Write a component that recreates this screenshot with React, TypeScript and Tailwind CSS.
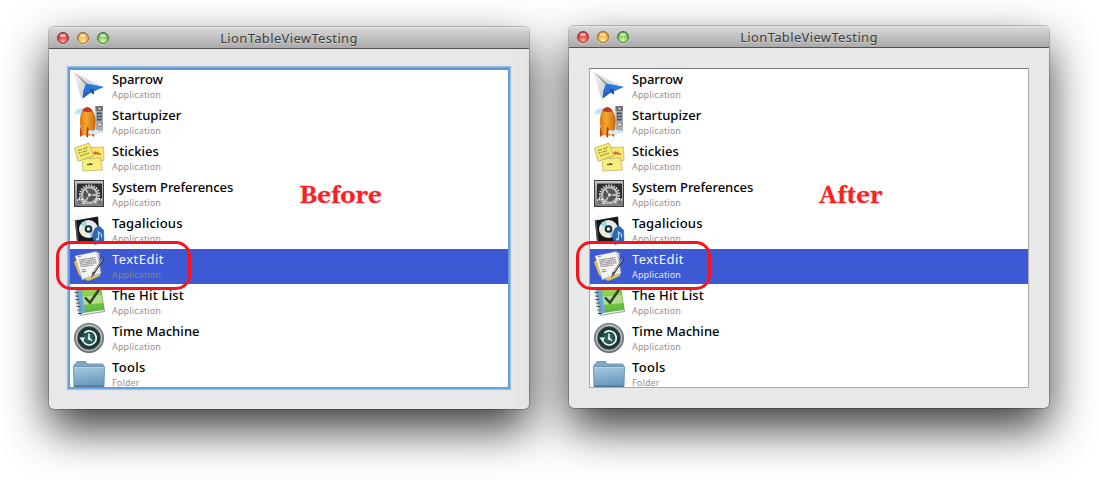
import React from 'react';

type IconProps = { uid: string };

interface Item {
  name: string;
  kind: string;
  icon: React.FC<IconProps>;
  tracking: string;
}

const iconClass = 'h-8 w-8 shrink-0 overflow-visible';

const SparrowIcon: React.FC<IconProps> = ({ uid }) => (
  <svg viewBox="0 0 32 32" className={iconClass}>
    <defs>
      <linearGradient id={`${uid}-wing`} x1="0" y1="0" x2="0.6" y2="1">
        <stop offset="0" stopColor="#f6f6f6" />
        <stop offset="1" stopColor="#cfcfd1" />
      </linearGradient>
      <linearGradient id={`${uid}-blue`} x1="0" y1="0" x2="0" y2="1">
        <stop offset="0" stopColor="#2f7fe2" />
        <stop offset="1" stopColor="#2459ae" />
      </linearGradient>
    </defs>
    <path d="M1.5 2.5 L14 14 L9 28 L7.5 26 Z" fill={`url(#${uid}-wing)`} stroke="#d2d2d2" strokeWidth=".4" />
    <path d="M1.5 2.5 L29 16.5 L14 14 Z" fill="#dcdcdd" />
    <path d="M1.5 2.5 L14.5 14 L13 15 Z" fill="#858587" />
    <path d="M13 13.5 L30.8 17 L21 21.2 L20.8 24.6 L18 22.4 L9.5 28.8 L10.5 20 Z" fill={`url(#${uid}-blue)`} />
    <path d="M13 13.5 L30.8 17 L19 18.6 Z" fill="#2c7ce0" />
    <path d="M17 18 L21 21.2 L20.8 24.6 L18 22.4 Z" fill="#1b4d98" />
  </svg>
);

const StartupizerIcon: React.FC<IconProps> = ({ uid }) => (
  <svg viewBox="0 0 32 32" className={iconClass}>
    <defs>
      <linearGradient id={`${uid}-hull`}>
        <stop offset="0" stopColor="#d9760d" />
        <stop offset=".4" stopColor="#f9ad35" />
        <stop offset="1" stopColor="#c8650f" />
      </linearGradient>
    </defs>
    <rect x="22.5" y="0" width="7.5" height="26" fill="#a7aaad" />
    <rect x="22.5" y="0" width="7.5" height="5" fill="#77797b" />
    <circle cx="26.5" cy="2.7" r="1.6" fill="#d8d8d8" stroke="#444" strokeWidth=".7" />
    <rect x="24" y="6.5" width="4.5" height="8" fill="#3c4a55" />
    <path d="M24.5 9h3.5M24.5 12h3.5" stroke="#8fb5cb" strokeWidth="1.3" />
    <circle cx="26.5" cy="18.5" r="1.8" fill="#eceff1" stroke="#666" strokeWidth=".7" />
    <path d="M2 6c0-3 3-4 5-3 2-2 6-1 5 2 1 2-1 3-3 3H4C2 9 1 8 2 6Z" fill="#bde7f5" />
    <path d="M9 18 L7 23 L7 31 L11 28Z M19 18 L22 24 L21 31 L17 28Z" fill="#cf4015" />
    <path d="M14.5 1 C22 3 25 15 20.5 27.5 C16 31 12 30 9 27.5 C5 14 7 3 14.5 1Z" fill={`url(#${uid}-hull)`} />
    <path d="M14.5 1 C11.5 1.6 10 3 9.3 5 C12.5 6.5 17 6.5 19.6 5 C18 2.6 16.5 1.5 14.5 1Z" fill="#c33c22" />
    <path d="M12 11c1.5-1.5 4-1.5 5 0s-1 3-2.5 3.5-3 2-2 3.5 3.5 1.5 5 0" stroke="#dd9024" strokeWidth=".9" fill="none" />
    <path d="M13.7 21 L15.7 22 L15 31.5 L13.4 31Z" fill="#a83a14" />
    <path d="M15 26c1-2 4-2 5-1 2-2 5-1 6 0 3-2 5 1 3 2-3 1-11 2-13 1Z" fill="#cdecf6" />
  </svg>
);

const StickiesIcon: React.FC<IconProps> = () => (
  <svg viewBox="0 0 32 32" className={iconClass}>
    <path d="M15.5 5.5 L30.5 5 L31 18.5 L17 19Z" fill="#f8e76d" stroke="#bda961" strokeWidth=".7" />
    <path d="M9 17 L27.5 16 L29.5 28 L10 29Z" fill="#f8ee7b" stroke="#b4aa66" strokeWidth=".7" />
    <path d="M1.5 6 L16 1 L20.5 13.5 L5 19.5Z" fill="#f4e968" stroke="#b1a765" strokeWidth=".7" />
    <path d="M5 8.5l4-1.2M10.5 6.8l4-1.3M5.5 11l3-.7M10 10l4-1.5M7 14l9-3" stroke="#5e5b2c" strokeWidth=".8" strokeDasharray="2 .6" />
    <path d="M20.5 11.5l1.5-1.5.5 2 2-1.7.5 2 1.5-1 1 1.5" stroke="#d34731" strokeWidth="1.1" fill="none" />
    <path d="M14 22.5l2 .5 1-2 1 2 2-1.5" stroke="#3c3a22" strokeWidth="1" fill="none" />
  </svg>
);

const PreferencesIcon: React.FC<IconProps> = ({ uid }) => (
  <svg viewBox="0 0 32 32" className={iconClass}>
    <defs>
      <linearGradient id={`${uid}-frame`} x1="0" y1="0" x2="0" y2="1">
        <stop offset="0" stopColor="#c9c9c9" />
        <stop offset="1" stopColor="#7c7c7e" />
      </linearGradient>
      <clipPath id={`${uid}-clip`}>
        <rect x="4" y="5.5" width="25" height="20.5" />
      </clipPath>
    </defs>
    <rect x="1.5" y="2.5" width="29" height="26" fill={`url(#${uid}-frame)`} stroke="#404042" />
    <rect x="4" y="5.5" width="25" height="20.5" fill="#303031" />
    <g clipPath={`url(#${uid}-clip)`}>
      <circle cx="16.5" cy="17" r="9.5" fill="none" stroke="#dcdcdc" strokeWidth="2.2" strokeDasharray="1.5 1.2" />
      <circle cx="16.5" cy="17" r="7.6" fill="#58585a" stroke="#c6c6c7" strokeWidth="1.8" />
      <path d="M16.5 17l-4-6M16.5 17l7 0M16.5 17l-4 6" stroke="#bcbcbd" strokeWidth="1.8" />
      <circle cx="16.5" cy="17" r="2.3" fill="#d5d5d5" stroke="#333" strokeWidth=".8" />
      <circle cx="6.5" cy="25" r="4" fill="#77777a" stroke="#f0f0f0" strokeWidth="2.2" strokeDasharray="1.5 1" />
      <circle cx="26.5" cy="25" r="4" fill="#77777a" stroke="#f0f0f0" strokeWidth="2.2" strokeDasharray="1.5 1" />
      <path d="M12 25.5h9" stroke="#a8a8aa" strokeWidth="1.5" />
    </g>
  </svg>
);

const TagaliciousIcon: React.FC<IconProps> = () => (
  <svg viewBox="0 0 32 32" className={iconClass}>
    <path d="M1 8L8 0" stroke="#b9b9b9" strokeWidth=".5" />
    <path d="M2 6.5 L25 2.5 L27 27 L4 27.5Z" fill="#171719" />
    <path d="M2 6.5 L4 27.5 L5.5 27 L3.5 6.3Z" fill="#505255" />
    <ellipse cx="15.5" cy="15" rx="9.5" ry="9" fill="#e4eaee" />
    <path d="M15.5 15L7.5 10.5A8.7 8.7 0 0 1 12.5 6.7Z" fill="#8fd9da" />
    <path d="M15.5 15L24 18A8.7 8.7 0 0 1 18 23.5Z" fill="#a9bfdc" />
    <path d="M15.5 15L6.5 17A8.7 8.7 0 0 0 10 22Z" fill="#f4f1c9" />
    <circle cx="15.5" cy="15" r="3.8" fill="#1d2835" />
    <circle cx="15.5" cy="15" r="1.8" fill="#e8edf1" />
    <path d="M22 14.5l4-2.5 4.5 4 .5 12.5-9.5 2-2-9Z" fill="#2b68b1" stroke="#184583" strokeWidth=".5" />
    <path d="M25.5 25v-7l3 2.5v3" stroke="#a9d4fb" strokeWidth="1.2" fill="none" />
    <ellipse cx="24.5" cy="25.3" rx="1.5" ry="1.2" fill="#a9d4fb" />
  </svg>
);

const TextEditIcon: React.FC<IconProps> = () => (
  <svg viewBox="0 0 32 32" className={iconClass}>
    <path d="M1 12 L4 10 L9 27 L27 23 L27 26 L15 31 L6 25Z" fill="#e8c53c" />
    <path d="M4 6 L26 2.5 L27.5 24 L9 30Z" fill="#dfdfdd" stroke="#9b9b9b" strokeWidth=".4" />
    <path d="M2 6 L23.5 1.5 L28 23 L9 29Z" fill="#f4f4f4" stroke="#a8a8a8" strokeWidth=".5" />
    <path
      d="M6 10l16.5-2.5M6.4 11.7l16.5-2.5M6.8 13.4l16.5-2.5M7.2 15.1l16.5-2.5M7.7 16.8l13-2"
      stroke="#8b8d90"
      strokeWidth="1.1"
      strokeDasharray="1.8 .3"
    />
    <path d="M5 6.8l3-.6M8.5 20l4-.7M8.5 22l5-.9" stroke="#6b6d70" strokeWidth=".8" />
    <path d="M30.5 8.5L20.5 23.5" stroke="#27292d" strokeWidth="2.2" strokeLinecap="round" />
    <path d="M30 8.5L21 22.2" stroke="#c5c9ce" strokeWidth="1" />
    <path d="M19.6 22l-1.6 6 4-4Z" fill="#5a5d62" />
  </svg>
);

const HitListIcon: React.FC<IconProps> = ({ uid }) => (
  <svg viewBox="0 0 32 32" className={iconClass}>
    <defs>
      <linearGradient id={`${uid}-cover`} x1="0" y1="0" x2="0" y2="1">
        <stop offset="0" stopColor="#9bd65a" />
        <stop offset="1" stopColor="#56b834" />
      </linearGradient>
    </defs>
    <path d="M3 5 L27.5 2.5 L31.5 25.5 L7 29.3Z" fill="#eef2ec" stroke="#73777a" strokeWidth=".7" />
    <path d="M3 4.5 L27.5 2.5 L31 23.5 L7 27Z" fill={`url(#${uid}-cover)`} stroke="#438c39" strokeWidth=".5" />
    <path d="M3 4.5 L8.5 4.1 L12.5 26.3 L7 27Z" fill="#6ba7dc" />
    <path d="M9.5 10.5 L28.5 9 L29.8 17 L11 18.8Z" fill="#b5e08a" />
    <path d="M12 11.5l5 5.3L26 3.5" stroke="#2c4532" strokeWidth="2.5" fill="none" />
    <path d="M1.5 6.5h4M1.7 10H6M2.2 13.5h4.3M2.7 17H7M3.3 20.5h4.3M4 24h4.3M4.7 27.5H9" stroke="#4b4e50" strokeWidth="1.2" />
    <path d="M1.5 5.6h3M1.7 9.1H5M2.2 12.6h3.3M2.7 16.1H6M3.3 19.6h3.3M4 23.1h3.3" stroke="#dadddd" strokeWidth=".6" />
  </svg>
);

const TimeMachineIcon: React.FC<IconProps> = ({ uid }) => (
  <svg viewBox="0 0 32 32" className={iconClass}>
    <defs>
      <linearGradient id={`${uid}-rim`} x1="0" y1="0" x2="0" y2="1">
        <stop offset="0" stopColor="#9a9fa2" />
        <stop offset="1" stopColor="#73787b" />
      </linearGradient>
      <radialGradient id={`${uid}-face`}>
        <stop offset="0" stopColor="#36706a" />
        <stop offset="1" stopColor="#10302f" />
      </radialGradient>
    </defs>
    <circle cx="16" cy="16" r="14.7" fill={`url(#${uid}-rim)`} stroke="#53585b" strokeWidth=".7" />
    <circle cx="16" cy="16" r="12.7" fill="none" stroke="#c3c8ca" strokeWidth="1" />
    <circle cx="16" cy="16" r="11" fill={`url(#${uid}-face)`} stroke="#31393b" />
    <path d="M9.4 17a7 7 0 1 0 2-6" stroke="#f0f6f5" strokeWidth="1.7" fill="none" />
    <path d="M6.3 15.5h6l-3 4Z" fill="#f0f6f5" />
    <path d="M16 11.5v5l3 2.2" stroke="#fff" strokeWidth="1.4" fill="none" />
    <circle cx="16" cy="16.5" r="1.2" fill="#fff" />
  </svg>
);

const FolderIcon: React.FC<IconProps> = ({ uid }) => (
  <svg viewBox="0 0 32 32" className={iconClass}>
    <defs>
      <linearGradient id={`${uid}-folder`} x1="0" y1="0" x2=".2" y2="1">
        <stop offset="0" stopColor="#a9cbe1" />
        <stop offset="1" stopColor="#6799bd" />
      </linearGradient>
    </defs>
    <path d="M1.2 9 V6.5 L3 6 L3.8 3.6 H12.5 L14 6 H29.5 L30.6 7 V10 H1.2Z" fill="#81a9c5" stroke="#557d99" strokeWidth=".7" />
    <path d="M.4 8.7 H31.6 L31 28.5 H1Z" fill={`url(#${uid}-folder)`} stroke="#557f9e" strokeWidth=".7" />
    <path d="M1 9.5h30" stroke="#c4dcea" strokeWidth=".7" />
    <path d="M1 28.2h30" stroke="#3f6886" strokeWidth="1" />
  </svg>
);

const items: Item[] = [
  { name: 'Sparrow', kind: 'Application', icon: SparrowIcon, tracking: 'tracking-[-0.1px]' },
  { name: 'Startupizer', kind: 'Application', icon: StartupizerIcon, tracking: 'tracking-[0.02px]' },
  { name: 'Stickies', kind: 'Application', icon: StickiesIcon, tracking: 'tracking-[0.05px]' },
  { name: 'System Preferences', kind: 'Application', icon: PreferencesIcon, tracking: 'tracking-[-0.06px]' },
  { name: 'Tagalicious', kind: 'Application', icon: TagaliciousIcon, tracking: 'tracking-[0.2px]' },
  { name: 'TextEdit', kind: 'Application', icon: TextEditIcon, tracking: 'tracking-[0.45px]' },
  { name: 'The Hit List', kind: 'Application', icon: HitListIcon, tracking: 'tracking-[0.2px]' },
  { name: 'Time Machine', kind: 'Application', icon: TimeMachineIcon, tracking: 'tracking-[0.05px]' },
  { name: 'Tools', kind: 'Folder', icon: FolderIcon, tracking: 'tracking-[0.3px]' },
];

const SELECTED = 'TextEdit';

const lights = [
  'border-[#8d3431] bg-[radial-gradient(circle_at_50%_85%,#ffb0a8_0%,#e8504b_45%,#b92d2e_100%)]',
  'border-[#97682a] bg-[radial-gradient(circle_at_50%_85%,#fff3a2_0%,#f4b941_50%,#c47a24_100%)]',
  'border-[#43752d] bg-[radial-gradient(circle_at_50%_85%,#dcffb4_0%,#82c85c_50%,#438a32_100%)]',
];

const TrafficLights = () => (
  <div className="absolute left-2 top-[5px] flex gap-2">
    {lights.map(light => (
      <span
        key={light}
        className={`flex h-3 w-3 justify-center rounded-full border shadow-[0_1px_0_rgba(255,255,255,0.5)] ${light}`}
      >
        <span className="mt-px h-[3px] w-[6px] rounded-full bg-white/60" />
      </span>
    ))}
  </div>
);

interface AppWindowProps {
  uid: string;
  label: string;
  focused?: boolean;
}

const AppWindow: React.FC<AppWindowProps> = ({ uid, label, focused }) => {
  const kindColor = (selected: boolean) => {
    if (!selected) return 'text-[#929292]';
    return focused ? 'text-[#848794]' : 'text-[#e4e8f8]';
  };

  return (
    <div
      className={`h-[382px] w-[480px] shrink-0 rounded-[5px] bg-[#e8e8e8] shadow-[0_0_0_1px_rgba(0,0,0,0.22),0_20px_46px_rgba(0,0,0,0.78)] ${
        focused ? 'mt-[27px]' : 'mt-[26px]'
      }`}
    >
      <div className="relative flex h-[22px] items-center justify-center rounded-t-[5px] border-b border-[#515151] bg-linear-to-b from-[#dadada] to-[#aaaaaa] pt-px shadow-[inset_0_1px_0_#e6e6e6]">
        <TrafficLights />
        <span className="text-[13px] leading-4 tracking-[0.35px] text-[#3c3c3c] [text-shadow:0_1px_0_rgba(255,255,255,0.45)]">
          LionTableViewTesting
        </span>
      </div>

      <div
        className={`relative mx-5 h-80 w-[440px] border bg-white ${
          focused
            ? 'mt-[19px] border-[#5e9ad5] shadow-[0_0_0_1px_#6ca4db,0_0_1px_2px_#9cc3e7,inset_0_1px_0_#5e9ad5]'
            : 'mt-5 border-[#a9a9a9] border-t-[#787878]'
        }`}
      >
        <div className="h-[318px] overflow-hidden">
          {items.map(item => {
            const selected = item.name === SELECTED;
            const Icon = item.icon;

            return (
              <div
                key={item.name}
                className={`mb-px flex h-[35px] pl-[3px] pt-px ${selected ? 'bg-[#3d59d4]' : ''}`}
              >
                <Icon uid={`${uid}-${item.name.replace(/ /g, '')}`} />
                <div className="ml-[7px] whitespace-nowrap">
                  <div
                    className={`text-[13px] leading-[18px] ${item.tracking} ${
                      selected ? 'font-normal text-[#f4f6fe]' : 'font-medium text-black'
                    }`}
                  >
                    {item.name}
                  </div>
                  <div className={`mt-0.5 text-[9px] leading-[10px] tracking-[0.15px] ${kindColor(selected)}`}>
                    {item.kind}
                  </div>
                </div>
              </div>
            );
          })}
        </div>

        {/* annotations drawn over the list */}
        <div className="absolute left-[-14px] top-[172px] h-[49px] w-[135px] rounded-[15px] border-3 border-[#fa1119]" />
        <div className="absolute left-[229px] top-[111px] font-[Gelasio,Georgia,'DejaVu_Serif',serif] text-[24px] font-bold leading-8 text-[#fc1f26] [-webkit-text-stroke:0.3px_#fc1f26]">
          {label}
        </div>
      </div>
    </div>
  );
};

export default function App() {
  return (
    <div className="flex h-[480px] w-[1098px] gap-10 overflow-hidden bg-white pl-[49px] font-['Noto_Sans','Open_Sans',sans-serif]">
      <AppWindow uid="before" label="Before" focused />
      <AppWindow uid="after" label="After" />
    </div>
  );
}
